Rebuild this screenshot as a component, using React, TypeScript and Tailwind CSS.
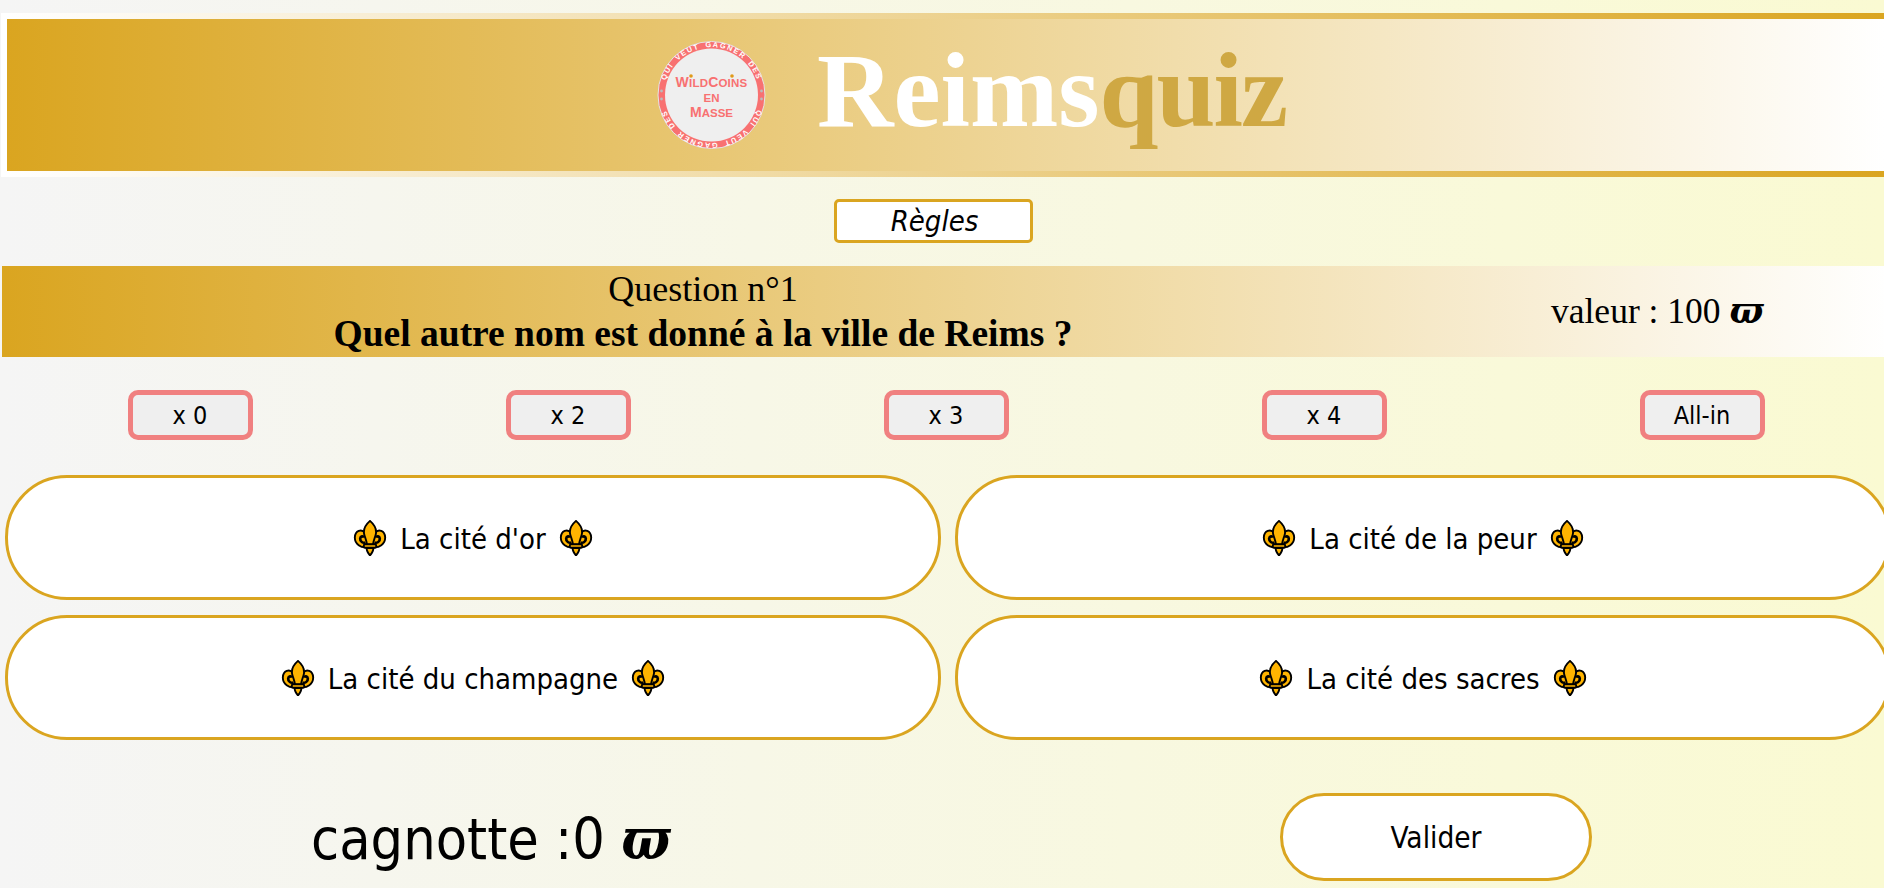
import React from 'react';

// fleur-de-lis emoji used around the answers
const Fleur: React.FC = () => (
  <svg viewBox="0 0 32 32" className="w-[36px] h-[36px] shrink-0" aria-hidden="true">
    <g fill="#ffb400" stroke="#000" strokeWidth="1.7" strokeLinejoin="round">
      <path d="M13.5 24C8 25 2.5 21.5 2.5 15.5 2.8 9.5 8.5 7.5 11.5 11.5 13.5 14.5 13.5 20 13.5 24Z" />
      <path d="M18.5 24C24 25 29.5 21.5 29.5 15.5 29.2 9.5 23.5 7.5 20.5 11.5 18.5 14.5 18.5 20 18.5 24Z" />
      <path d="M12 20C9.8 20.8 7 19.2 7.3 16.3 7.6 14.3 10 14 10.6 15.7" fill="none" strokeWidth="2.4" />
      <path d="M20 20C22.2 20.8 25 19.2 24.7 16.3 24.4 14.3 22 14 21.4 15.7" fill="none" strokeWidth="2.4" />
      <path d="M16 .8C20.8 5 22.6 9 20.8 14 19.8 17 19 19 18.6 22L13.4 22C13 19 12.2 17 11.2 14 9.4 9 11.2 5 16 .8Z" />
      <path d="M16 31.5C14 29 13 27 13 25L19 25C19 27 18 29 16 31.5Z" />
      <rect x="10.5" y="21.5" width="11" height="3.2" rx="1.2" />
    </g>
  </svg>
);

const Logo: React.FC = () => (
  <svg viewBox="0 0 109 108" className="w-[109px] h-[108px] shrink-0">
    <defs>
      <path id="arcTop" d="M6.5 54a48 48 0 0 1 96 0" />
      <path id="arcBottom" d="M102.5 54a48 48 0 0 1-96 0" />
    </defs>
    <circle cx="54.5" cy="54" r="53.5" fill="#f87171" stroke="#e5e5e5" strokeWidth="1" />
    <circle cx="54.5" cy="54" r="46.5" fill="#efefef" />
    <text className="font-['Liberation_Sans',sans-serif] font-bold" fontSize="7.4" fill="#fff" letterSpacing="1.5" wordSpacing="2" textAnchor="middle">
      <textPath href="#arcTop" startOffset="50%">QUI VEUT GAGNER DES</textPath>
    </text>
    <text className="font-['Liberation_Sans',sans-serif] font-bold" fontSize="7.4" fill="#fff" letterSpacing="1.5" wordSpacing="2" textAnchor="middle">
      <textPath href="#arcBottom" startOffset="50%">QUI VEUT GAGNER DES</textPath>
    </text>
    <circle cx="4.5" cy="50" r="1.4" fill="#bbb" />
    <circle cx="104.5" cy="50" r="1.4" fill="#bbb" />
    <circle cx="4.5" cy="58" r="1.4" fill="#bbb" />
    <circle cx="104.5" cy="58" r="1.4" fill="#bbb" />
    <g className="font-['Liberation_Sans',sans-serif] font-bold" fill="#f87171" textAnchor="middle">
      <text x="54.5" y="46" fontSize="11.5" letterSpacing="0.2"><tspan fontSize="14">W</tspan>ILD<tspan fontSize="14">C</tspan>OINS</text>
      <text x="54.5" y="61" fontSize="11.5">EN</text>
      <text x="54.5" y="76" fontSize="11.5"><tspan fontSize="14">M</tspan>ASSE</text>
    </g>
    <circle cx="34" cy="35" r="1.8" fill="#e09a1a" />
    <circle cx="75" cy="35" r="1.8" fill="#e09a1a" />
  </svg>
);

const Pi: React.FC = () => (
  <span className="font-['DejaVu_Serif',serif] font-bold italic">ϖ</span>
);

const multipliers = ['x 0', 'x 2', 'x 3', 'x 4', 'All-in'];
const answers = ["La cité d'or", 'La cité de la peur', 'La cité du champagne', 'La cité des sacres'];

export default function App() {
  return (
    <div className="h-[888px] w-full overflow-hidden bg-[linear-gradient(to_right,#f5f5f5,#fafad2)] text-black font-['DejaVu_Sans',sans-serif] [font-stretch:condensed]">
      <div className="w-[1890px] ml-px">
        <div className="h-0 w-[1158px] ml-[293px] shadow-[0_0_4px_rgba(0,0,0,0.12)]"></div>

        {/* Header */}
        <header className="mt-[13px] h-[164px] flex items-center pl-[650px] border-[6px] [border-image:linear-gradient(to_right,#ffffff,#daa520)_1] bg-[linear-gradient(to_right,#daa520,#ffffff)]">
          <Logo />
          <h1 className="ml-[51px] -mt-[8px] text-[106px] leading-none font-bold font-['Liberation_Serif',serif] text-white whitespace-nowrap">
            Reims<span className="text-[#cfa843] tracking-[-2px]">quiz</span>
          </h1>
        </header>

        <div className="mt-[22px] flex justify-center pr-[26px]">
          <button className="w-[199px] h-[44px] pl-[3px] bg-white border-[3px] border-[#daa520] rounded-[5px] text-[29px] leading-none italic">Règles</button>
        </div>

        {/* Question */}
        <section className="mt-[23px] ml-px h-[91px] pt-[2px] flex items-center bg-[linear-gradient(to_right,#daa520,#ffffff)] font-['Liberation_Serif',serif] [font-stretch:normal]">
          <div className="w-[1402px] text-center">
            <p className="text-[36px] leading-[40px]">Question n°1</p>
            <p className="mt-[3px] text-[37.5px] leading-[44px] font-bold">Quel autre nom est donné à la ville de Reims ?</p>
          </div>
          <p className="ml-[147px] -mt-[2px] text-[35.5px] leading-none whitespace-nowrap">valeur : 100 <Pi /></p>
        </section>

        {/* Jokers */}
        <div className="mt-[33px] flex justify-around">
          {multipliers.map(m => (
            <button key={m} className="w-[125px] h-[50px] bg-[#efefef] border-[5px] border-[#f08080] rounded-[10px] text-[25px] leading-none">{m}</button>
          ))}
        </div>

        {/* Answers */}
        <div className="mt-[35px] pl-1 grid grid-cols-2 gap-x-[14px] gap-y-[15px]">
          {answers.map(a => (
            <button key={a} className="h-[125px] bg-white border-[3px] border-[#daa520] rounded-[62px] flex items-center justify-center gap-[12px] text-[29px] leading-none">
              <Fleur />
              <span className="pt-[4px]">{a}</span>
              <Fleur />
            </button>
          ))}
        </div>

        {/* Bottom */}
        <div className="mt-[53px] flex items-center">
          <p className="w-[1279px] pl-[310px] pt-[3px] text-[57px] leading-none whitespace-nowrap">cagnotte :0 <Pi /></p>
          <button className="w-[312px] h-[88px] bg-white border-[3px] border-[#daa520] rounded-[44px] pt-[3px] text-[29.5px] leading-none">Valider</button>
        </div>
      </div>
    </div>
  );
}
